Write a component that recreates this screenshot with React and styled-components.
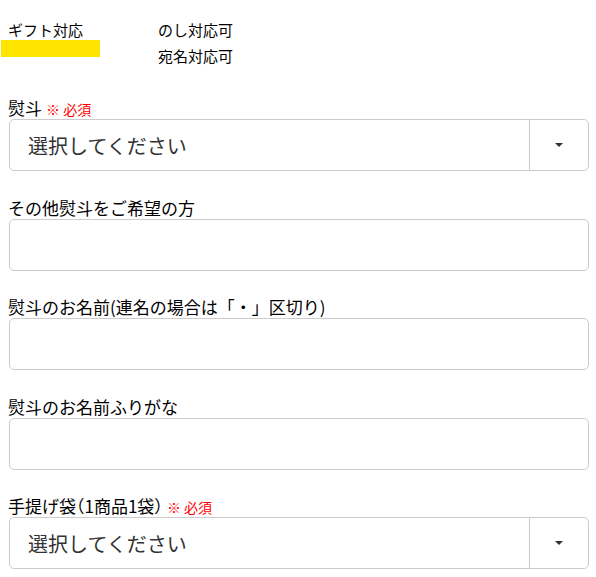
import React from 'react'
import styled, { createGlobalStyle } from 'styled-components'

const GlobalStyle = createGlobalStyle`
  body {
    margin: 0;
    background: #fff;
    font-family: "Noto Sans CJK JP", "Noto Sans", sans-serif;
    color: #000;
  }
`

const Page = styled.div`
  width: 596px;
  padding: 20px 0 0 8px;
  box-sizing: border-box;
`

const GiftRow = styled.div`
  display: grid;
  grid-template-columns: 150px 1fr;
  font-size: 15px;
  line-height: 20px;
`

const GiftTitle = styled.div`
  display: flex;
  flex-direction: column;
`

const Marker = styled.div`
  width: 99px;
  height: 17px;
  margin-left: -7px;
  background: #ffe400;
`

const GiftList = styled.div`
  display: flex;
  flex-direction: column;
  gap: 6px;
`

const Form = styled.div`
  display: flex;
  flex-direction: column;
  gap: 26.5px;
  margin-top: 32px;
`

const Field = styled.div`
  display: flex;
  flex-direction: column;
  gap: 1px;
`

const Label = styled.label`
  display: block;
  height: 20px;
  font-size: 17px;
  line-height: 20px;
  white-space: nowrap;
  ${p => p.$narrow && 'font-feature-settings: "halt";'}
`

const Required = styled.span`
  color: #f00;
  font-size: 14px;
  line-height: 1;
  margin-left: 4px;
  font-feature-settings: normal;
`

const Box = styled.div`
  margin-left: 1px;
  width: 580px;
  height: 52px;
  box-sizing: border-box;
  border: 1px solid #ccc;
  border-radius: 5px;
  background: #fff;
  display: flex;
  align-items: stretch;
`

const SelectText = styled.div`
  flex: 1;
  display: flex;
  align-items: center;
  padding-left: 18px;
  font-size: 20px;
  color: #333;
  border-right: 1px solid #ccc;
`

const Arrow = styled.div`
  width: 58px;
  display: flex;
  align-items: center;
  justify-content: center;
  &::after {
    content: '';
    border-left: 4px solid transparent;
    border-right: 4px solid transparent;
    border-top: 4px solid #333;
  }
`

const Select = () => (
  <Box>
    <SelectText>選択してください</SelectText>
    <Arrow />
  </Box>
)

const Input = () => <Box />

export default function App() {
  return (
    <Page>
      <GlobalStyle />
      <GiftRow>
        <GiftTitle>
          <span>ギフト対応</span>
          <Marker />
        </GiftTitle>
        <GiftList>
          <span>のし対応可</span>
          <span>宛名対応可</span>
        </GiftList>
      </GiftRow>
      <Form>
        <Field>
          <Label>熨斗<Required>※ 必須</Required></Label>
          <Select />
        </Field>
        <Field>
          <Label>その他熨斗をご希望の方</Label>
          <Input />
        </Field>
        <Field>
          <Label>熨斗のお名前(連名の場合は「・」区切り)</Label>
          <Input />
        </Field>
        <Field>
          <Label>熨斗のお名前ふりがな</Label>
          <Input />
        </Field>
        <Field>
          <Label $narrow>手提げ袋（1商品1袋）<Required>※ 必須</Required></Label>
          <Select />
        </Field>
      </Form>
    </Page>
  )
}
